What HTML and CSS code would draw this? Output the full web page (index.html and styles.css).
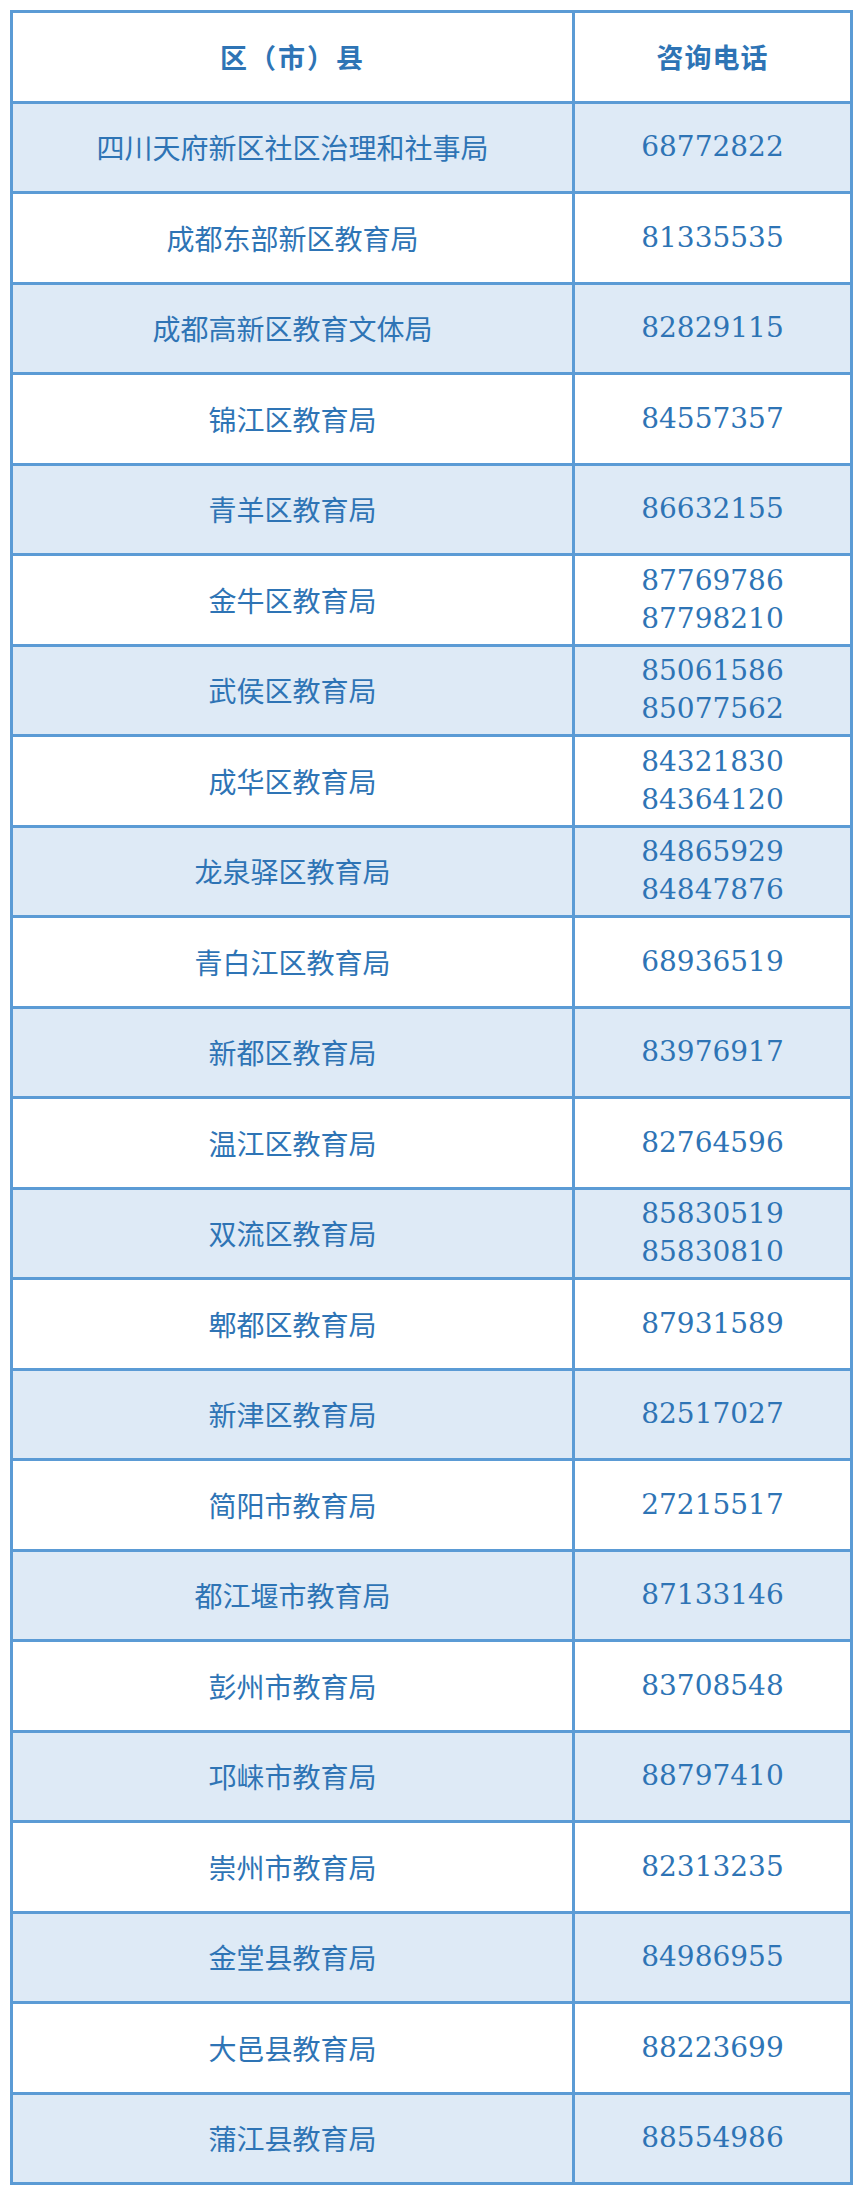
FILE: index.html
```html
<!DOCTYPE html>
<html lang="zh-CN">
<head>
<meta charset="utf-8">
<title>咨询电话</title>
<link rel="stylesheet" href="styles.css">
</head>
<body>
<div class="table">
  <div class="cell head name">区（市）县</div><div class="cell head phone-head">咨询电话</div>
  <div class="cell name alt">四川天府新区社区治理和社事局</div><div class="cell phone alt">68772822</div>
  <div class="cell name">成都东部新区教育局</div><div class="cell phone">81335535</div>
  <div class="cell name alt">成都高新区教育文体局</div><div class="cell phone alt">82829115</div>
  <div class="cell name">锦江区教育局</div><div class="cell phone">84557357</div>
  <div class="cell name alt">青羊区教育局</div><div class="cell phone alt">86632155</div>
  <div class="cell name">金牛区教育局</div><div class="cell phone">87769786<br>87798210</div>
  <div class="cell name alt">武侯区教育局</div><div class="cell phone alt">85061586<br>85077562</div>
  <div class="cell name">成华区教育局</div><div class="cell phone">84321830<br>84364120</div>
  <div class="cell name alt">龙泉驿区教育局</div><div class="cell phone alt">84865929<br>84847876</div>
  <div class="cell name">青白江区教育局</div><div class="cell phone">68936519</div>
  <div class="cell name alt">新都区教育局</div><div class="cell phone alt">83976917</div>
  <div class="cell name">温江区教育局</div><div class="cell phone">82764596</div>
  <div class="cell name alt">双流区教育局</div><div class="cell phone alt">85830519<br>85830810</div>
  <div class="cell name">郫都区教育局</div><div class="cell phone">87931589</div>
  <div class="cell name alt">新津区教育局</div><div class="cell phone alt">82517027</div>
  <div class="cell name">简阳市教育局</div><div class="cell phone">27215517</div>
  <div class="cell name alt">都江堰市教育局</div><div class="cell phone alt">87133146</div>
  <div class="cell name">彭州市教育局</div><div class="cell phone">83708548</div>
  <div class="cell name alt">邛崃市教育局</div><div class="cell phone alt">88797410</div>
  <div class="cell name">崇州市教育局</div><div class="cell phone">82313235</div>
  <div class="cell name alt">金堂县教育局</div><div class="cell phone alt">84986955</div>
  <div class="cell name">大邑县教育局</div><div class="cell phone">88223699</div>
  <div class="cell name alt">蒲江县教育局</div><div class="cell phone alt">88554986</div>
</div>
</body>
</html>
```
FILE: styles.css
```css
html, body {
  margin: 0;
  padding: 0;
  background: #ffffff;
}
body {
  padding: 10px 11px 11px 10px;
}
.table {
  display: grid;
  grid-template-columns: 559px 275px;
  grid-template-rows: repeat(24, 87.5px);
  gap: 3px;
  padding: 3px;
  background: #5b9bd5;
  width: 843px;
  box-sizing: border-box;
}
.cell {
  background: #ffffff;
  display: flex;
  align-items: center;
  justify-content: center;
  text-align: center;
  color: #2e74b5;
}
.cell.alt {
  background: #deeaf6;
}
.name {
  font-family: "Noto Sans CJK SC", "Noto Sans", sans-serif;
  font-size: 28px;
  line-height: 1.3;
}
.head {
  font-size: 27px;
  font-weight: bold;
  letter-spacing: 2px;
}
.phone-head {
  font-family: "Noto Sans CJK SC", "Noto Sans", sans-serif;
  font-size: 27px;
  font-weight: bold;
  letter-spacing: 1px;
}
.phone {
  font-family: "DejaVu Serif", "Liberation Serif", serif;
  font-size: 28px;
  line-height: 38px;
}
```
